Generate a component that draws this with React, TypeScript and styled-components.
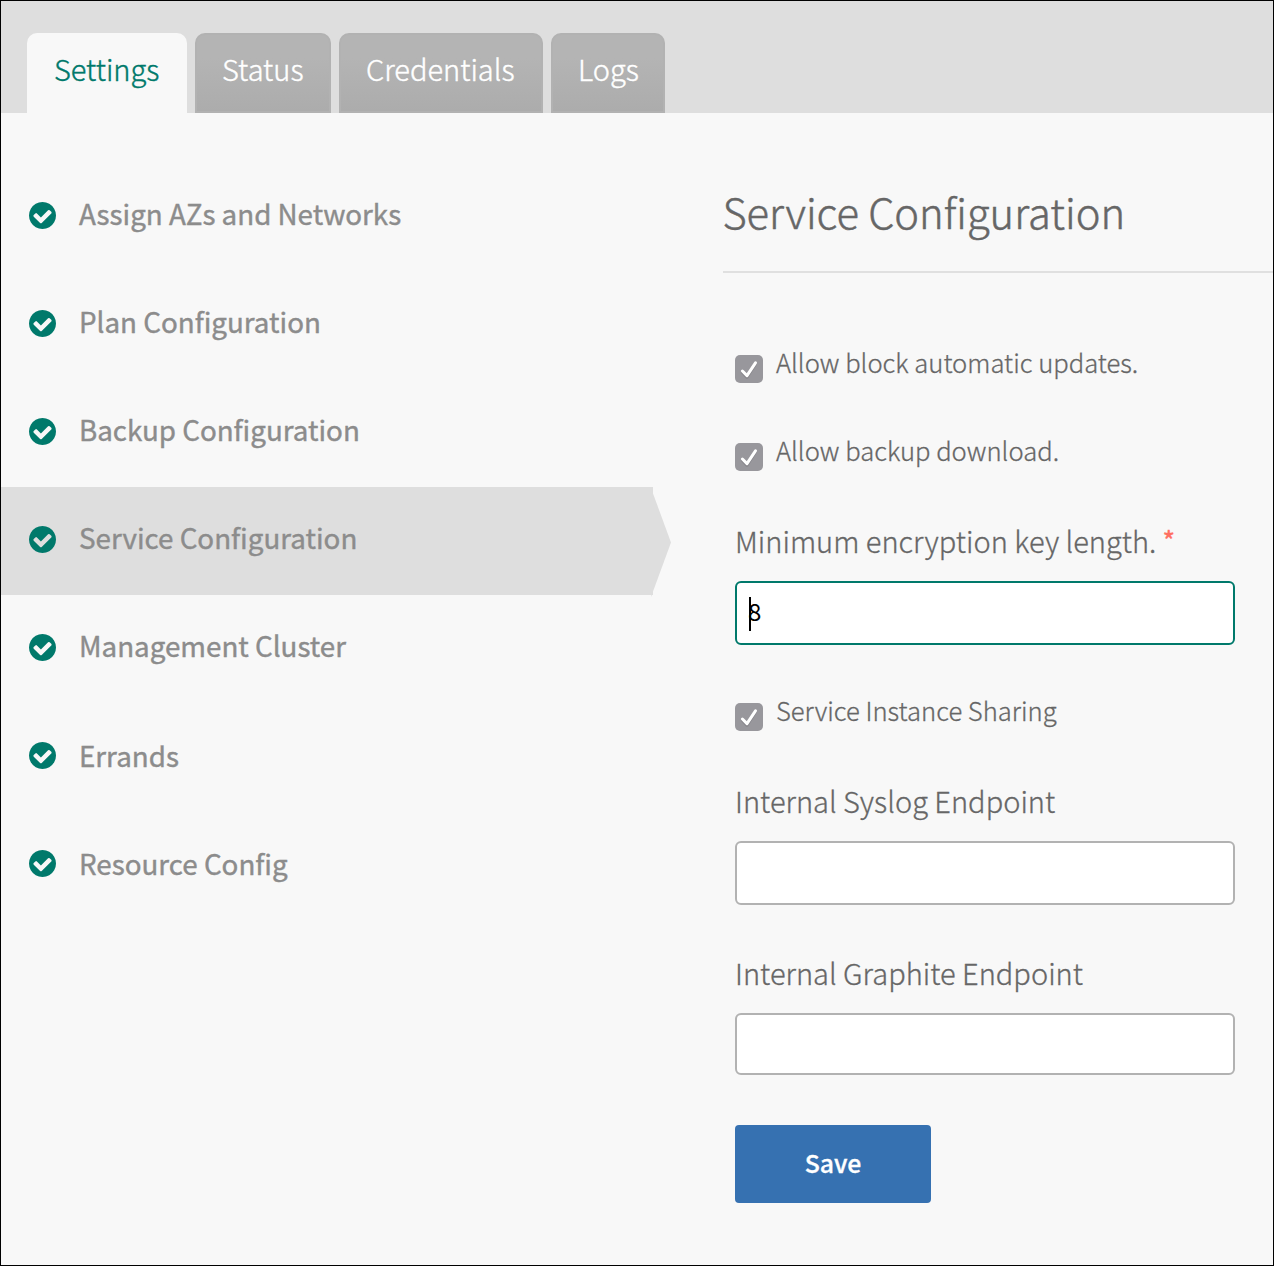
import React from "react";
import styled, { createGlobalStyle } from "styled-components";

const GlobalStyle = createGlobalStyle`
  *, *::before, *::after { box-sizing: border-box; }
  body {
    margin: 0;
    background: #f8f8f8;
    font-family: "Noto Sans CJK SC", "Noto Sans", sans-serif;
    color: #666;
  }
`;

const Page = styled.div`
  width: 1274px;
  height: 1266px;
  display: flex;
  flex-direction: column;
  border: 1px solid #000;
  background: #f8f8f8;
  overflow: hidden;
`;

const TabBar = styled.header`
  display: flex;
  align-items: flex-end;
  gap: 8px;
  height: 112px;
  flex: none;
  padding-left: 26px;
  background: #dedede;
`;

const Tab = styled.a<{ $active?: boolean; $width: number }>`
  width: ${(p) => p.$width}px;
  height: 80px;
  border-radius: 10px 10px 0 0;
  border: 2px solid ${(p) => (p.$active ? "#f8f8f8" : "#b2b2b2")};
  padding-left: 25px;
  border-bottom-width: ${(p) => (p.$active ? 0 : 2)}px;
  background: ${(p) =>
    p.$active ? "#f8f8f8" : "linear-gradient(#b4b4b4 30%, #acacac)"};
  color: ${(p) => (p.$active ? "#00796b" : "#fff")};
  font-size: 29px;
  font-weight: 300;
  -webkit-text-stroke: 0.4px currentColor;
  line-height: 66px;
  white-space: nowrap;
`;

const Body = styled.div`
  display: flex;
  flex: 1;
`;

const Sidebar = styled.nav`
  width: 652px;
  flex: none;
  padding-top: 50px;
`;

const NavItem = styled.a<{ $selected?: boolean }>`
  position: relative;
  display: flex;
  align-items: center;
  height: 108px;
  padding: 0 0 0 28px;
  background: ${(p) => (p.$selected ? "#dedede" : "transparent")};

  &::after {
    content: "";
    display: ${(p) => (p.$selected ? "block" : "none")};
    position: absolute;
    left: 650px;
    top: 1px;
    width: 20px;
    height: 109px;
    background: #dedede;
    clip-path: polygon(0 0, 100% 50%, 0 100%);
  }
`;

const NavIcon = styled.svg`
  width: 27px;
  height: 27px;
  margin-bottom: 3px;
  flex: none;
  fill: #00796b;
`;

const NavLabel = styled.span<{ $shift: number }>`
  margin-left: 23px;
  padding-bottom: ${(p) => p.$shift}px;
  font-size: 27.75px;
  font-weight: 400;
  -webkit-text-stroke: 0.4px currentColor;
  line-height: 40px;
  color: #8c8c8c;
  white-space: nowrap;
`;

const Content = styled.main`
  flex: 1;
  padding-left: 70px;
`;

const Title = styled.h1`
  margin: 0;
  height: 160px;
  padding-top: 68px;
  border-bottom: 2px solid #e0e0e0;
  font-size: 41.7px;
  font-weight: 300;
  -webkit-text-stroke: 0.5px currentColor;
  line-height: 60px;
  text-indent: -0.6px;
`;

const Form = styled.form`
  display: flex;
  flex-direction: column;
  align-items: flex-start;
  padding: 70px 0 0 12px;
`;

const CheckRow = styled.label<{ $after: number }>`
  display: flex;
  align-items: flex-start;
  height: 40px;
  margin-bottom: ${(p) => p.$after}px;
  font-size: 25.6px;
  font-weight: 300;
  -webkit-text-stroke: 0.3px currentColor;
  line-height: 38px;
  white-space: nowrap;
`;

const Box = styled.svg`
  width: 28px;
  height: 28px;
  margin: 12px 13px 0 0;
  flex: none;
`;

const Field = styled.div<{ $after: number }>`
  margin-bottom: ${(p) => p.$after}px;
`;

const FieldLabel = styled.label`
  display: block;
  height: 60px;
  font-size: 29px;
  font-weight: 300;
  -webkit-text-stroke: 0.3px currentColor;
  line-height: 38px;
  white-space: nowrap;
`;

const Required = styled.span`
  color: #ff6f61;
  font-weight: 500;
  font-size: 25px;
  line-height: 1;
  vertical-align: 3px;
`;

const InputWrap = styled.div`
  position: relative;
`;

const Input = styled.input<{ $height: number; $focused?: boolean }>`
  display: block;
  width: 500px;
  height: ${(p) => p.$height}px;
  padding: 0 11px 5px;
  border: 2px solid ${(p) => (p.$focused ? "#00796b" : "#b2b2b2")};
  border-radius: 6px;
  outline: none;
  background: #fff;
  color: #000;
  font-family: inherit;
  font-size: 24px;
  font-weight: 400;
`;

const Caret = styled.span`
  position: absolute;
  left: 14px;
  top: 16px;
  width: 2px;
  height: 34px;
  background: #000;
`;

const SaveButton = styled.button`
  width: 196px;
  height: 78px;
  padding: 0 0 4px;
  border: 0;
  border-radius: 4px;
  background: #3671b1;
  color: #fff;
  font-family: inherit;
  font-size: 24.8px;
  font-weight: 500;
  -webkit-text-stroke: 0.3px currentColor;
`;

const CheckCircle = () => (
  <NavIcon viewBox="0 128 1536 1536">
    <path d="M1284 734q0-28-18-46l-91-90q-19-19-45-19t-45 19l-408 407-226-226q-19-19-45-19t-45 19l-91 90q-18 18-18 46 0 27 18 45l362 362q19 19 45 19 27 0 46-19l543-543q18-18 18-45zM1536 896q0 209-103 385.5t-279.5 279.5-385.5 103-385.5-103-279.5-279.5-103-385.5 103-385.5 279.5-279.5 385.5-103 385.5 103 279.5 279.5 103 385.5z" />
  </NavIcon>
);

const CheckedBox = () => (
  <Box viewBox="0 0 28 28">
    <rect width="28" height="28" rx="5" fill="#98979c" />
    <path d="M7.3 17.2 12 22.2 20.6 8.8" fill="none" stroke="#7d7c81" strokeOpacity=".7" strokeWidth="3" strokeLinecap="round" strokeLinejoin="round" />
    <path d="M7.4 16 12 20.6 20.5 7.8" fill="none" stroke="#fff" strokeWidth="3" strokeLinecap="round" strokeLinejoin="round" />
  </Box>
);

const tabs = [
  { label: "Settings", width: 160, active: true },
  { label: "Status", width: 136 },
  { label: "Credentials", width: 204 },
  { label: "Logs", width: 114 },
];

const sections = [
  { label: "Assign AZs and Networks", shift: 8 },
  { label: "Plan Configuration", shift: 8 },
  { label: "Backup Configuration", shift: 8 },
  { label: "Service Configuration", shift: 8, selected: true },
  { label: "Management Cluster", shift: 8 },
  { label: "Errands", shift: 4 },
  { label: "Resource Config", shift: 4 },
];

export default function App() {
  return (
    <>
      <GlobalStyle />
      <Page>
        <TabBar>
          {tabs.map((t) => (
            <Tab key={t.label} $width={t.width} $active={t.active}>{t.label}</Tab>
          ))}
        </TabBar>
        <Body>
          <Sidebar>
            {sections.map((s) => (
              <NavItem key={s.label} $selected={s.selected}>
                <CheckCircle />
                <NavLabel $shift={s.shift}>{s.label}</NavLabel>
              </NavItem>
            ))}
          </Sidebar>
          <Content>
            <Title>Service Configuration</Title>
            <Form>
              <CheckRow $after={48}><CheckedBox />Allow block automatic updates.</CheckRow>
              <CheckRow $after={50}><CheckedBox />Allow backup download.</CheckRow>
              <Field $after={46}>
                <FieldLabel>Minimum encryption key length. <Required>*</Required></FieldLabel>
                <InputWrap>
                  <Input $height={64} $focused defaultValue="8" />
                  <Caret />
                </InputWrap>
              </Field>
              <CheckRow $after={50}><CheckedBox />Service Instance Sharing</CheckRow>
              <Field $after={48}>
                <FieldLabel>Internal Syslog Endpoint</FieldLabel>
                <Input $height={64} />
              </Field>
              <Field $after={50}>
                <FieldLabel>Internal Graphite Endpoint</FieldLabel>
                <Input $height={62} />
              </Field>
              <SaveButton type="button">Save</SaveButton>
            </Form>
          </Content>
        </Body>
      </Page>
    </>
  );
}
